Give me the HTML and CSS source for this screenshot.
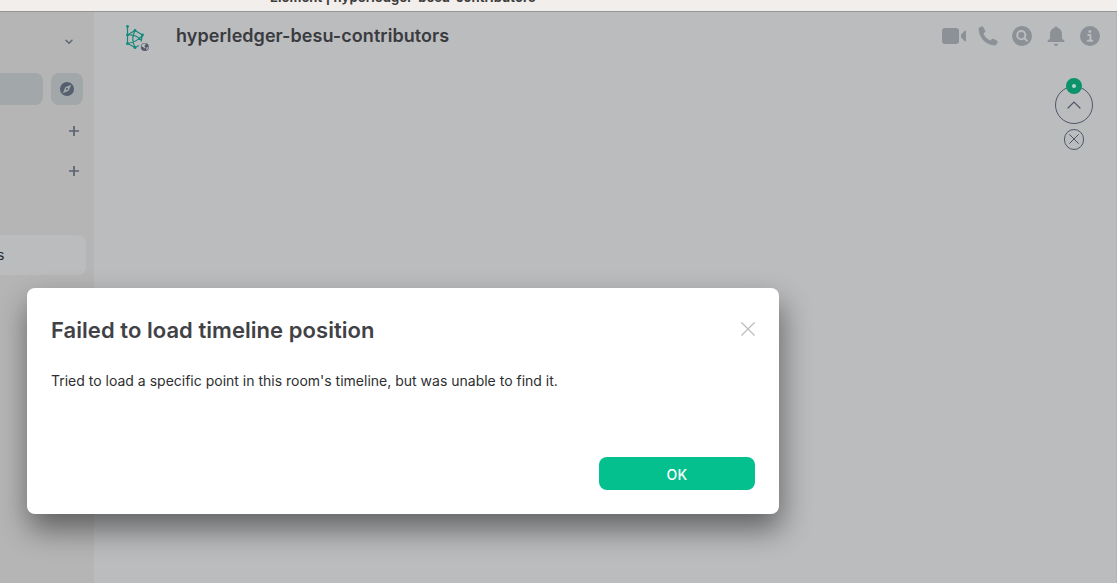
FILE: index.html
```html
<!DOCTYPE html>
<html lang="en">
<head>
<meta charset="utf-8">
<title>Element | hyperledger-besu-contributors</title>
<link rel="stylesheet" href="styles.css">
</head>
<body>
<div class="window">
  <div class="titlebar"><span class="titlebar-text">Element | hyperledger-besu-contributors</span></div>
  <div class="app">
    <aside class="sidebar">
      <div class="sidebar-top">
        <svg class="chevron" width="8" height="6" viewBox="0 0 8 6"><path d="M1 1.200 4 4.200 7 1.200" fill="none" stroke="#606872" stroke-width="1.500" stroke-linecap="round" stroke-linejoin="round"/></svg>
      </div>
      <div class="search-row">
        <div class="search"></div>
        <div class="explore">
          <svg width="14" height="14" viewBox="0 0 14 14"><circle cx="7" cy="7" r="7" fill="#565f6d"/><path d="M11.200 2.800 8.700 8.700 2.800 11.200 5.300 5.300z" fill="#a2a9ae"/><circle cx="7" cy="7" r="1.100" fill="#565f6d"/></svg>
        </div>
      </div>
      <div class="section"><svg width="10" height="10" viewBox="0 0 10 10"><path d="M5 0v10M0 5h10" stroke="#596273" stroke-width="1.700"/></svg></div>
      <div class="section"><svg width="10" height="10" viewBox="0 0 10 10"><path d="M5 0v10M0 5h10" stroke="#596273" stroke-width="1.700"/></svg></div>
      <div class="room">s</div>
    </aside>
    <main class="main">
      <header class="header">
        <svg class="avatar" width="26" height="28" viewBox="0 0 26 28">
          <g fill="none" stroke="#168a7c" stroke-width="1.200"><path d="M3.500 2.500V19.500L11 23.500M3.500 11 11 6.500 18.500 11 17 17.500M3.500 11Q12 10 17.500 16.500M3.500 19.500Q13.500 18 18.500 11M11 6.500Q6.500 15 11 23.500L15 21.500"/></g>
          <g fill="#168a7c"><circle cx="3.500" cy="2.500" r="1.400"/><circle cx="3.500" cy="11" r="1.400"/><circle cx="3.500" cy="19.500" r="1.500"/><circle cx="11" cy="6.500" r="1.400"/><circle cx="18.500" cy="11" r="1.400"/><circle cx="11" cy="23.500" r="1.500"/></g>
          <circle cx="20.800" cy="23" r="5.200" fill="#bbbcbe"/><circle cx="20.800" cy="23" r="4" fill="#555d6b"/>
          <path d="M18.800 19.900 21.800 19.300 21.400 21 20.200 22 21.400 23.200 20.800 24.400 19.100 23 17.600 22.800 17.800 21zM22.600 23.500 24.400 23 23.600 25 22.100 26z" fill="#bbbcbe"/>
        </svg>
        <h1 class="room-name">hyperledger-besu-contributors</h1>
        <div class="actions">
          <svg width="24" height="16" viewBox="0 0 24 16"><rect width="17" height="16" rx="3" fill="#8b9196"/><path d="M19 6.500 22.500 3Q24 2 24 3.500v9Q24 14 22.500 13L19 9.500z" fill="#8b9196"/></svg>
          <svg width="20" height="20" viewBox="0 0 20 20"><path d="M1 1.800 3.500.4Q4.500 0 5.200 1L7.200 4.600Q7.600 5.400 7 6L5.400 7.700Q7.500 12.300 12.300 14.600L14 13Q14.600 12.400 15.400 12.800L19 14.800Q20 15.400 19.600 16.400L18.200 18.800Q17.800 19.400 17 19.400C8 19.200.8 12 .6 3Q.6 2.200 1 1.800z" fill="#8b9196"/></svg>
          <svg width="20" height="20" viewBox="0 0 20 20"><circle cx="10" cy="10" r="10" fill="#8b9196"/><circle cx="9.300" cy="9.200" r="4.100" fill="none" stroke="#bbbcbe" stroke-width="2"/><path d="m12.400 12.300 2.500 2.500" stroke="#bbbcbe" stroke-width="2" stroke-linecap="round"/></svg>
          <svg width="20" height="20" viewBox="0 0 20 20"><path d="M8.600 1.700Q8.600.2 10 .2t1.400 1.500C14.500 2.300 16 5 16 8v4.500l2.400 2.300q.8 1.200-.6 1.200H2.200q-1.400 0-.6-1.200L4 12.500V8c0-3 1.500-5.700 4.600-6.300zM7.800 17.700h4.400Q12 20 10 20t-2.200-2.300z" fill="#8b9196"/></svg>
          <svg width="20" height="20" viewBox="0 0 20 20"><circle cx="10" cy="10" r="10" fill="#8b9196"/><circle cx="9.900" cy="5.500" r="1.500" fill="#bbbcbe"/><path d="M8.200 9h2.200v5.500M7.700 14.700h4.700" fill="none" stroke="#bbbcbe" stroke-width="1.900" stroke-linecap="round" stroke-linejoin="round"/></svg>
        </div>
      </header>
      <div class="timeline-nav">
        <div class="jump">
          <svg width="14" height="8" viewBox="0 0 14 8"><path d="M1 7 7 1l6 6" fill="none" stroke="#4e5768" stroke-width="1.200" stroke-linecap="round"/></svg>
          <span class="jump-badge"></span>
        </div>
        <div class="dismiss"><svg width="10" height="10" viewBox="0 0 10 10"><path d="m.3.3 9.400 9.400m0-9.400L.3 9.700" stroke="#4e5768" stroke-width="1"/></svg></div>
      </div>
    </main>
  </div>
  <section class="dialog" role="dialog">
    <div class="dialog-head">
      <h2 class="dialog-title">Failed to load timeline position</h2>
      <svg class="close" width="14" height="14" viewBox="0 0 14 14"><path d="m.4.4 13.200 13.200m0-13.200L.4 13.600" stroke="#bdbdbd" stroke-width="1.250"/></svg>
    </div>
    <p class="dialog-text">Tried to load a specific point in this room's timeline, but was unable to find it.</p>
    <button class="ok">OK</button>
  </section>
</div>
</body>
</html>
```
FILE: styles.css
```css
* { box-sizing: border-box; }
body { margin: 0; font-family: Inter, "Liberation Sans", sans-serif; }
.window { position: relative; width: 1117px; height: 583px; overflow: hidden; display: flex; flex-direction: column; }
.titlebar { height: 12px; flex: none; overflow: hidden; background: #f1eeeb; border-bottom: 1px solid #939597; display: flex; align-items: flex-end; padding: 0 0 6px 270px; }
.titlebar-text { font-size: 13px; line-height: 16px; font-weight: 700; letter-spacing: .1px; color: #3f3e3e; white-space: nowrap; }
.app { flex: 1; display: flex; }
.sidebar { width: 94px; background: #b5b5b5; display: flex; flex-direction: column; }
.sidebar-top { height: 61px; padding: 27px 0 0 65px; }
.chevron { display: block; }
.search-row { display: flex; gap: 8px; height: 32px; margin-bottom: 6px; }
.search { width: 43px; background: #a2a7aa; border-radius: 0 8px 8px 0; }
.explore { width: 32px; background: #a2a7aa; border-radius: 8px; display: flex; align-items: center; justify-content: center; }
.section { height: 40px; display: flex; align-items: center; padding-left: 69px; }
.room { width: 86px; height: 40px; margin-top: 44px; background: #bbbcbe; border-radius: 0 8px 8px 0; font-size: 14px; line-height: 40px; color: #292c30; text-indent: -3px; }
.main { flex: 1; background: #bbbcbe; border-right: 1px solid #b3b4b6; }
.header { height: 50px; display: flex; align-items: center; padding: 0 16px 0 30px; }
.avatar { margin-top: 1px; }
.room-name { margin: 0 0 2px 26px; font-size: 18px; line-height: 24px; font-weight: 600; letter-spacing: .05px; color: #393b3e; }
.actions { margin: 0 0 2px auto; display: flex; align-items: center; gap: 14px; }
.actions svg:first-child { margin-right: -2px; }
.timeline-nav { display: flex; flex-direction: column; align-items: center; width: 38px; margin: 24px 23px 0 auto; gap: 5px; }
.jump { position: relative; width: 38px; height: 38px; border: 1px solid #4e5768; border-radius: 50%; display: flex; align-items: center; justify-content: center; }
.jump-badge { position: absolute; left: 10px; top: -9px; width: 16px; height: 16px; border-radius: 50%; background: #bbd5ca; border: 6px solid #0c936b; }
.dismiss { width: 20px; height: 21px; border: 1px solid #4e5768; border-radius: 10px; display: flex; align-items: center; justify-content: center; padding-bottom: 1px; }
.dialog { position: absolute; left: 27px; top: 288px; width: 752px; height: 226px; padding: 24px; background: #fff; border-radius: 8px; box-shadow: 2px 15px 30px 0 rgba(0, 0, 0, .48); display: flex; flex-direction: column; }
.dialog-head { display: flex; align-items: center; justify-content: space-between; height: 36px; }
.dialog-title { margin: 0; font-size: 22px; line-height: 36px; font-weight: 600; letter-spacing: .05px; color: #414246; }
.close { margin-bottom: 2px; }
.dialog-text { margin: 22px 0 0; font-size: 14px; line-height: 22px; color: #2e2f32; white-space: nowrap; }
.ok { margin: auto 0 0 auto; width: 156px; height: 33px; border: 0; padding: 1px 0 0; border-radius: 8px; background: #03c08e; color: #fff; font: 500 14px Inter, "Liberation Sans", sans-serif; letter-spacing: .3px; }
```
